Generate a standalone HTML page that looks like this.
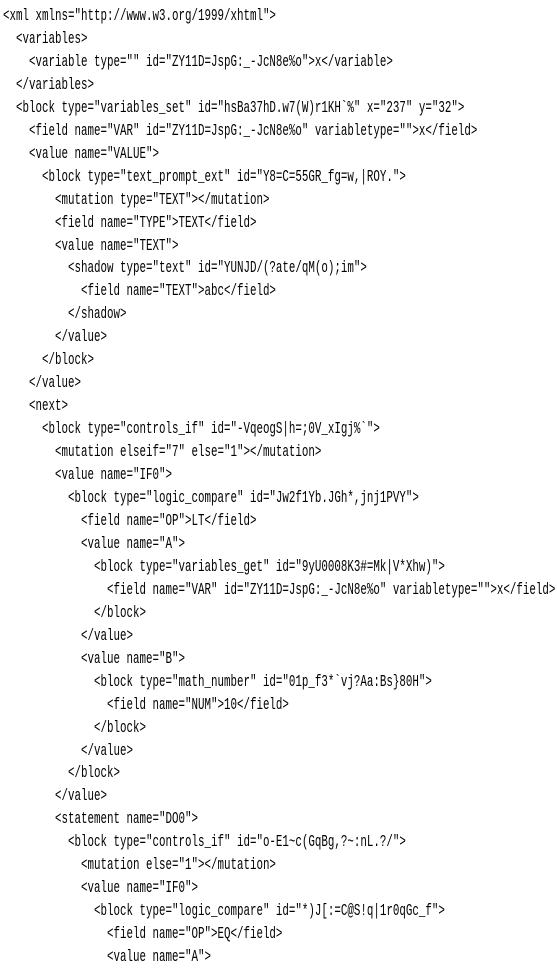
<!DOCTYPE html>
<html><head><meta charset="utf-8"><style>
html,body{margin:0;padding:0;background:#fff;width:557px;height:952px;overflow:hidden}
pre{margin:0;position:absolute;left:3px;top:6px;font-family:"Liberation Mono",monospace;font-size:17px;line-height:22.95px;color:#000;transform:scaleX(0.637);transform-origin:0 0;}
</style></head><body><pre>&lt;xml xmlns="http://www.w3.org/1999/xhtml"&gt;
  &lt;variables&gt;
    &lt;variable type="" id="ZY11D=JspG:_-JcN8e%o"&gt;x&lt;/variable&gt;
  &lt;/variables&gt;
  &lt;block type="variables_set" id="hsBa37hD.w7(W)r1KH`%" x="237" y="32"&gt;
    &lt;field name="VAR" id="ZY11D=JspG:_-JcN8e%o" variabletype=""&gt;x&lt;/field&gt;
    &lt;value name="VALUE"&gt;
      &lt;block type="text_prompt_ext" id="Y8=C=55GR_fg=w,|ROY."&gt;
        &lt;mutation type="TEXT"&gt;&lt;/mutation&gt;
        &lt;field name="TYPE"&gt;TEXT&lt;/field&gt;
        &lt;value name="TEXT"&gt;
          &lt;shadow type="text" id="YUNJD/(?ate/qM(o);im"&gt;
            &lt;field name="TEXT"&gt;abc&lt;/field&gt;
          &lt;/shadow&gt;
        &lt;/value&gt;
      &lt;/block&gt;
    &lt;/value&gt;
    &lt;next&gt;
      &lt;block type="controls_if" id="-VqeogS|h=;0V_xIgj%`"&gt;
        &lt;mutation elseif="7" else="1"&gt;&lt;/mutation&gt;
        &lt;value name="IF0"&gt;
          &lt;block type="logic_compare" id="Jw2f1Yb.JGh*,jnj1PVY"&gt;
            &lt;field name="OP"&gt;LT&lt;/field&gt;
            &lt;value name="A"&gt;
              &lt;block type="variables_get" id="9yU0008K3#=Mk|V*Xhw)"&gt;
                &lt;field name="VAR" id="ZY11D=JspG:_-JcN8e%o" variabletype=""&gt;x&lt;/field&gt;
              &lt;/block&gt;
            &lt;/value&gt;
            &lt;value name="B"&gt;
              &lt;block type="math_number" id="01p_f3*`vj?Aa:Bs}80H"&gt;
                &lt;field name="NUM"&gt;10&lt;/field&gt;
              &lt;/block&gt;
            &lt;/value&gt;
          &lt;/block&gt;
        &lt;/value&gt;
        &lt;statement name="DO0"&gt;
          &lt;block type="controls_if" id="o-E1~c(GqBg,?~:nL.?/"&gt;
            &lt;mutation else="1"&gt;&lt;/mutation&gt;
            &lt;value name="IF0"&gt;
              &lt;block type="logic_compare" id="*)J[:=C@S!q|1r0qGc_f"&gt;
                &lt;field name="OP"&gt;EQ&lt;/field&gt;
                &lt;value name="A"&gt;
</pre></body></html>
